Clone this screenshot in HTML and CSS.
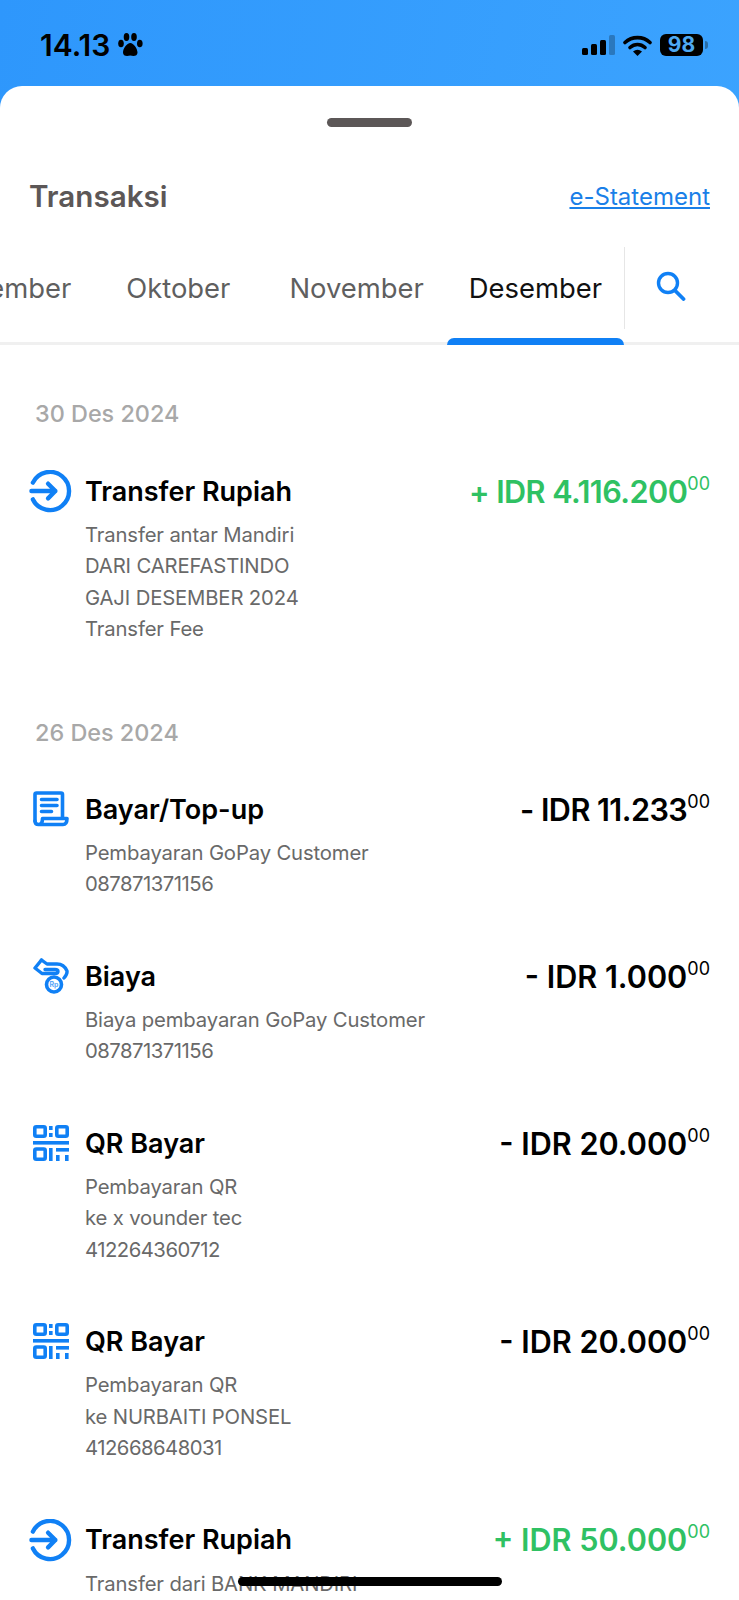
FILE: index.html
```html
<!DOCTYPE html>
<html lang="id">
<head>
    <meta charset="UTF-8">
    <meta name="viewport" content="width=device-width, initial-scale=1.0">
    <title>Transaksi</title>
    <link rel="stylesheet" href="styles.css">
</head>
<body>

<svg class="defs" width="0" height="0">
    <symbol id="icon-transfer" viewBox="0 0 44 44">
        <g fill="none" stroke="#1080f5" stroke-width="4.500" stroke-linecap="round" stroke-linejoin="round">
            <path d="M4 12.900A19.500 19.500 0 1 1 4 30.100"/>
            <path d="M2.500 21.500H27M19.500 14l7.500 7.500-7.500 7.500"/>
        </g>
    </symbol>
    <symbol id="icon-bill" viewBox="0 0 36 36">
        <g fill="none" stroke="#1080f5" stroke-width="3.600" stroke-linejoin="round" stroke-linecap="round">
            <path d="M2 30V3.500Q2 2 3.500 2H28Q29.500 2 29.500 3.500V26"/>
            <path d="M2 30Q2 33.500 5.500 33.500H30Q34 33.500 34 27.500H9.500Q9.500 33.500 5.500 33.500"/>
            <path d="M8.500 8.500H24M8.500 14.500H24M8.500 20.500H18.500"/>
        </g>
    </symbol>
    <symbol id="icon-qr" viewBox="0 0 36 36">
        <g fill="none" stroke="#1080f5" stroke-width="3.600">
            <rect x="1.800" y="1.800" width="10.400" height="9.400" rx="1.500"/>
            <rect x="23.800" y="1.800" width="10.400" height="9.400" rx="1.500"/>
            <rect x="1.800" y="24" width="10.400" height="10.200" rx="1.500"/>
        </g>
        <g fill="#1080f5">
            <rect x="16" y="1" width="3.600" height="4"/>
            <rect x="16" y="8" width="3.600" height="4"/>
            <rect x="0" y="16" width="36" height="3.600"/>
            <rect x="16" y="23" width="3.600" height="13"/>
            <rect x="23" y="23" width="13" height="3.600"/>
            <rect x="23" y="30" width="3.600" height="6"/>
            <rect x="32" y="30" width="3.600" height="6"/>
        </g>
    </symbol>
</svg>

<header class="status-bar">
    <div class="status-left">
        <span class="clock">14.13</span>
        <svg class="paw" width="25" height="24" viewBox="0 0 25 24">
            <ellipse cx="3" cy="10.500" rx="2.800" ry="3.800"/>
            <ellipse cx="8.500" cy="4" rx="2.800" ry="4"/>
            <ellipse cx="16" cy="4" rx="2.800" ry="4"/>
            <ellipse cx="21.800" cy="10.500" rx="2.800" ry="3.800"/>
            <path d="M12.300 10C9 10 5 15.500 5 19.500 5 23 8.500 23.500 12.300 22.500 16 23.500 19.500 23 19.500 19.500 19.500 15.500 15.500 10 12.300 10Z"/>
        </svg>
    </div>
    <div class="status-right">
        <svg width="33" height="20" viewBox="0 0 33 20">
            <rect x="0" y="13" width="6" height="7" rx="1.500"/>
            <rect x="9" y="9" width="6" height="11" rx="1.500"/>
            <rect x="18" y="5" width="6" height="15" rx="1.500"/>
            <rect x="27" y="0" width="6" height="20" rx="1.500" fill-opacity="0.25"/>
        </svg>
        <svg width="29" height="21" viewBox="0 0 29 21">
            <path d="M2 7.500C9 1 20 1 27 7.500" fill="none" stroke="#000" stroke-width="3.600" stroke-linecap="round"/>
            <path d="M7 12.500C11.500 8.500 17.500 8.500 22 12.500" fill="none" stroke="#000" stroke-width="3.600" stroke-linecap="round"/>
            <path d="M14.500 21 10 16.500Q14.500 13 19 16.500Z"/>
        </svg>
        <div class="battery">
            <span class="battery-body">98</span>
            <span class="battery-nub"></span>
        </div>
    </div>
</header>

<main class="sheet">
    <div class="handle"></div>

    <div class="sheet-head">
        <h1>Transaksi</h1>
        <a class="statement" href="#">e-Statement</a>
    </div>

    <nav class="tabs">
        <div class="tab-list">
            <span class="tab tab-sep">September</span>
            <span class="tab tab-okt">Oktober</span>
            <span class="tab tab-nov">November</span>
            <span class="tab active">Desember</span>
        </div>
        <div class="tab-search">
            <svg width="30" height="30" viewBox="0 0 30 30">
                <circle cx="12" cy="12" r="9.500" fill="none" stroke="#1080f5" stroke-width="3.400"/>
                <path d="M19 19.500 27.500 28" fill="none" stroke="#1080f5" stroke-width="3.800" stroke-linecap="round"/>
            </svg>
        </div>
    </nav>

    <section class="day">
        <div class="date">30 Des 2024</div>
        <div class="trx">
            <svg class="trx-icon icon-round"><use href="#icon-transfer"/></svg>
            <div class="trx-body">
                <div class="trx-top">
                    <span class="trx-title">Transfer Rupiah</span>
                    <span class="amount plus tight">+ IDR 4.116.200<sup>00</sup></span>
                </div>
                <p class="trx-sub">Transfer antar Mandiri</p>
                <p class="trx-sub">DARI CAREFASTINDO</p>
                <p class="trx-sub">GAJI DESEMBER 2024</p>
                <p class="trx-sub">Transfer Fee</p>
            </div>
        </div>
    </section>

    <section class="day">
        <div class="date">26 Des 2024</div>
        <div class="trx">
            <svg class="trx-icon"><use href="#icon-bill"/></svg>
            <div class="trx-body">
                <div class="trx-top">
                    <span class="trx-title">Bayar/Top-up</span>
                    <span class="amount tight">- IDR 11.233<sup>00</sup></span>
                </div>
                <p class="trx-sub">Pembayaran GoPay Customer</p>
                <p class="trx-sub num">087871371156</p>
            </div>
        </div>
        <div class="trx">
            <svg class="trx-icon" viewBox="0 0 36 36">
                <g fill="none" stroke="#1080f5" stroke-width="3.400" stroke-linejoin="round" stroke-linecap="round">
                    <path d="M8.500 2 2 10 9 15.500H22Q25 15.500 25 13.500T22 11.500H12"/>
                    <path d="M8.500 2 14 6H24Q31 6 34 13 34.500 16 31 20"/>
                </g>
                <circle cx="21" cy="26.500" r="7.500" fill="#fff" stroke="#1080f5" stroke-width="3.600"/>
                <text class="coin-text" x="21" y="29" text-anchor="middle">Rp</text>
            </svg>
            <div class="trx-body">
                <div class="trx-top">
                    <span class="trx-title">Biaya</span>
                    <span class="amount">- IDR 1.000<sup>00</sup></span>
                </div>
                <p class="trx-sub">Biaya pembayaran GoPay Customer</p>
                <p class="trx-sub num">087871371156</p>
            </div>
        </div>
        <div class="trx">
            <svg class="trx-icon"><use href="#icon-qr"/></svg>
            <div class="trx-body">
                <div class="trx-top">
                    <span class="trx-title">QR Bayar</span>
                    <span class="amount">- IDR 20.000<sup>00</sup></span>
                </div>
                <p class="trx-sub">Pembayaran QR</p>
                <p class="trx-sub">ke x vounder tec</p>
                <p class="trx-sub num">412264360712</p>
            </div>
        </div>
        <div class="trx">
            <svg class="trx-icon"><use href="#icon-qr"/></svg>
            <div class="trx-body">
                <div class="trx-top">
                    <span class="trx-title">QR Bayar</span>
                    <span class="amount">- IDR 20.000<sup>00</sup></span>
                </div>
                <p class="trx-sub">Pembayaran QR</p>
                <p class="trx-sub">ke NURBAITI PONSEL</p>
                <p class="trx-sub num">412668648031</p>
            </div>
        </div>
        <div class="trx">
            <svg class="trx-icon icon-round"><use href="#icon-transfer"/></svg>
            <div class="trx-body">
                <div class="trx-top">
                    <span class="trx-title">Transfer Rupiah</span>
                    <span class="amount plus">+ IDR 50.000<sup>00</sup></span>
                </div>
                <p class="trx-sub">Transfer dari BANK MANDIRI</p>
            </div>
        </div>
    </section>
</main>

<div class="home-bar"></div>

</body>
</html>
```

FILE: styles.css
```css
* {
    box-sizing: border-box;
}
html, body {
    height: 1600px;
    margin: 0;
    overflow: hidden;
}
body {
    position: relative;
    font-family: Inter, "Noto Sans", sans-serif;
    background: linear-gradient(100deg, #2e97fc, #40a7ff);
    color: #000;
}
.defs {
    position: absolute;
}

/* status bar */
.status-bar {
    height: 86px;
    padding: 4px 31px 0 40px;
    display: flex;
    justify-content: space-between;
    align-items: center;
}
.status-left {
    display: flex;
    align-items: center;
    gap: 8px;
}
.clock {
    font-size: 30px;
    font-weight: 600;
    line-height: 1;
}
.status-right {
    display: flex;
    align-items: center;
    gap: 8px;
}
.battery {
    display: flex;
    align-items: center;
    gap: 2px;
}
.battery-body {
    width: 43px;
    height: 22px;
    border-radius: 6px;
    background: #000;
    color: #4ea9f2;
    font-size: 21px;
    font-weight: 700;
    line-height: 22px;
    text-align: center;
}
.battery-nub {
    width: 3px;
    height: 8px;
    border-radius: 0 3px 3px 0;
    background: #2a6ea8;
}

/* sheet */
.sheet {
    height: 1514px;
    background: #fff;
    border-radius: 22px 22px 0 0;
    overflow: hidden;
}
.handle {
    width: 85px;
    height: 9px;
    margin: 32px auto 0;
    border-radius: 5px;
    background: #5c5757;
}
.sheet-head {
    margin-top: 50px;
    padding: 0 29px;
    display: flex;
    justify-content: space-between;
    align-items: center;
}
h1 {
    margin: 0;
    font-size: 29.600px;
    font-weight: 600;
    line-height: 38px;
    color: #5c5757;
}
.statement {
    font-size: 24px;
    color: #1a7fe8;
}

/* month tabs */
.tabs {
    height: 98px;
    margin-top: 32px;
    display: flex;
    box-shadow: inset 0 -3px 0 #f0f0f0;
}
.tab-list {
    flex: 1;
    min-width: 0;
    display: flex;
    justify-content: flex-end;
    overflow: hidden;
}
.tab {
    position: relative;
    flex-shrink: 0;
    height: 98px;
    padding: 0 22px 16px;
    display: flex;
    align-items: center;
    font-size: 27.400px;
    color: #5f5f5f;
}
.tab-sep {
    padding-right: 27px;
}
.tab-okt {
    padding: 0 30px 16px 28px;
}
.tab-nov {
    padding: 0 23px 16px 29px;
}
.tab.active {
    color: #111;
}
.tab.active::after {
    content: "";
    position: absolute;
    left: 0;
    right: 0;
    bottom: 0;
    height: 7px;
    border-radius: 8px 8px 0 0;
    background: #1080f5;
}
.tab-search {
    flex: 0 0 115px;
    height: 82px;
    padding: 24px 0 0 31px;
    border-left: 1px solid #e6e6e6;
}

/* transactions */
.day {
    padding: 0 29px;
}
.date {
    margin-top: 52px;
    padding-left: 6px;
    font-size: 23.400px;
    font-weight: 500;
    line-height: 34px;
    color: #a8a8a8;
}
.day + .day .date {
    margin-top: 72px;
}
.trx {
    margin-top: 40px;
    display: flex;
}
.day + .day .date + .trx {
    margin-top: 39px;
}
.trx + .trx {
    margin-top: 56.400px;
}
.trx-icon {
    flex: 0 0 36px;
    width: 36px;
    height: 36px;
    margin: 2px 16px 0 4px;
}
.icon-round {
    flex-basis: 43px;
    width: 43px;
    height: 43px;
    margin: -1px 13px 0 0;
}
.coin-text {
    font-size: 7px;
    font-weight: 700;
    fill: #5aa8f8;
}
.trx-body {
    flex: 1;
    min-width: 0;
}
.trx-top {
    height: 40px;
    margin-bottom: 8px;
    display: flex;
    justify-content: space-between;
    align-items: center;
}
.trx-title {
    font-size: 27px;
    font-weight: 600;
}
.amount {
    font-size: 30.600px;
    font-weight: 600;
    white-space: nowrap;
}
.tight {
    letter-spacing: -0.550px;
}
.amount sup {
    font-size: 18px;
    font-weight: 400;
    letter-spacing: 0;
    line-height: 0;
    vertical-align: 13px;
}
.plus {
    color: #2fc163;
}
.trx-sub {
    margin: 0;
    font-size: 20.300px;
    letter-spacing: -0.150px;
    line-height: 31.300px;
    color: #696969;
}
.trx-sub.num {
    letter-spacing: -0.500px;
}

.home-bar {
    position: absolute;
    left: 238px;
    top: 1577px;
    width: 264px;
    height: 9px;
    border-radius: 5px;
    background: #000;
}
```
